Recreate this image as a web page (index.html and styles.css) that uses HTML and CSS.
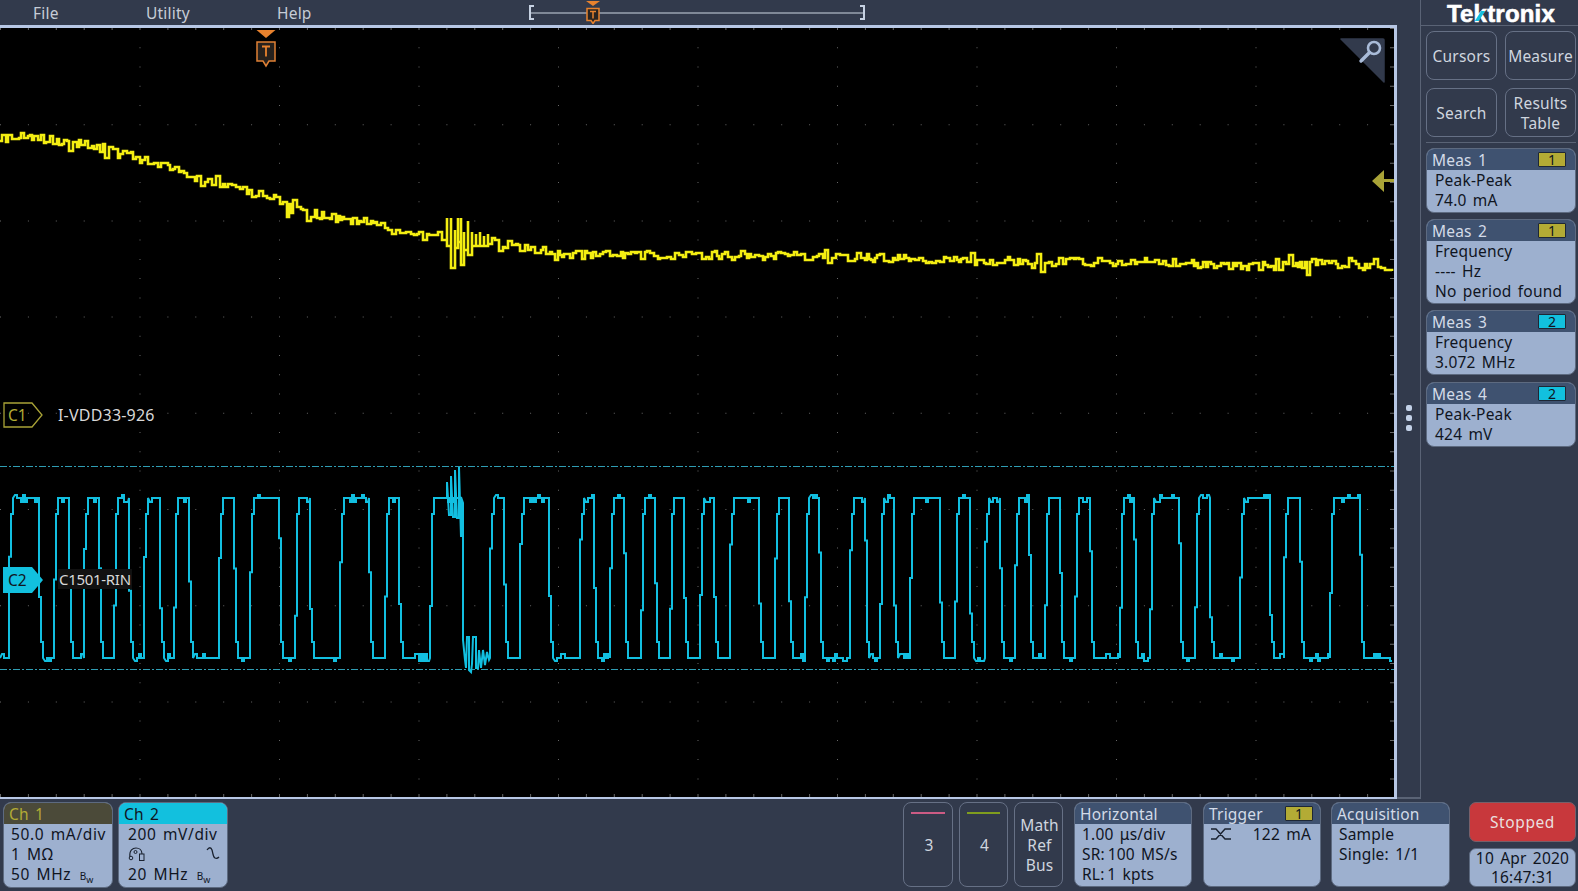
FILE: index.html
```html
<!DOCTYPE html>
<html>
    <head>
        <meta name="viewport" content="width=device-width, initial-scale=1" />
        <link rel="stylesheet" href="styles.css">
    </head>
    <body>
        <div class="scope">
            <div class="display">
                <div class="menubar">
                    <span class="menu-item item-file">File</span>
                    <span class="menu-item item-utility">Utility</span>
                    <span class="menu-item item-help">Help</span>
                    <div class="track">
                        <span class="track-line"></span>
                        <svg class="track-marker" width="16" height="25" viewBox="0 0 16 25">
                            <path d="M1 2h14l-7 5z" fill="#e8822e"/>
                            <path d="M2 9.500h12v12h-4l-2 3-2-3h-4z" fill="#2a2420" stroke="#e8822e" stroke-width="1.500"/>
                            <path d="M5 12.500h6M8 12.500v7" fill="none" stroke="#e8822e" stroke-width="1.500"/>
                        </svg>
                    </div>
                </div>
                <div class="plot">
                    <svg id="traces" class="traces" viewBox="0 28 1394 769" width="1394" height="769"></svg>

                    <svg class="trigger-marker" width="22" height="40" viewBox="0 0 22 40">
                        <path d="M1.500 1h19l-9.500 8z" fill="#e8822e"/>
                        <path d="M2 13h18v19h-6l-3 5-3-5h-6z" fill="#26211d" stroke="#e08035" stroke-width="1.500"/>
                        <path d="M7 17.500h8M11 17.500v10" fill="none" stroke="#e8822e" stroke-width="1.800"/>
                    </svg>

                    <div class="zoom-corner">
                        <svg width="46" height="46" viewBox="0 0 46 46">
                            <path d="M2 1h42a1 1 0 0 1 1 1v42z" fill="#323a4c" stroke="#323a4c" stroke-width="1.500" stroke-linejoin="round"/>
                            <circle cx="35" cy="10" r="6" fill="none" stroke="#a9bbd8" stroke-width="2.600"/>
                            <path d="M30.500 14.500L22 23" fill="none" stroke="#a9bbd8" stroke-width="3.400" stroke-linecap="round"/>
                        </svg>
                    </div>

                    <svg class="ref-arrow" width="23" height="22" viewBox="0 0 23 22">
                        <path d="M0 11L12 0v9h11v3h-11v10z" fill="#a9a337"/>
                    </svg>

                    <div class="tag tag-c1">
                        <svg width="40" height="26" viewBox="0 0 40 26">
                            <path d="M1 1h28l10 12-10 12h-28z" fill="none" stroke="#a9a337" stroke-width="1.300"/>
                        </svg>
                        <span class="tag-text">C1</span>
                    </div>
                    <span class="wave-name name-c1">I-VDD33-926</span>

                    <div class="tag tag-c2">
                        <svg width="40" height="26" viewBox="0 0 40 26">
                            <path d="M0 0h29l11 13-11 13h-29z" fill="#12c0de"/>
                        </svg>
                        <span class="tag-text">C2</span>
                    </div>
                    <span class="wave-name name-c2">C1501-RIN</span>
                </div>
            </div>

            <aside class="side">
                <div class="side-rail">
                    <span class="dot"></span>
                    <span class="dot"></span>
                    <span class="dot"></span>
                </div>
                <div class="side-main">
                    <div class="logo">Te<span class="logo-k">k</span>tronix</div>
                    <div class="tools">
                        <div class="ghost">Cursors</div>
                        <div class="ghost">Measure</div>
                        <div class="ghost">Search</div>
                        <div class="ghost">Results<br>Table</div>
                    </div>
                    <div class="meas-list">
                        <div class="badge">
                            <div class="badge-head">Meas 1 <span class="chip chip-yellow">1</span></div>
                            <div class="badge-body meas-body">Peak-Peak<br>74.0 mA</div>
                        </div>
                        <div class="badge">
                            <div class="badge-head">Meas 2 <span class="chip chip-yellow">1</span></div>
                            <div class="badge-body meas-body">Frequency<br>---- Hz<br>No period found</div>
                        </div>
                        <div class="badge">
                            <div class="badge-head">Meas 3 <span class="chip chip-cyan">2</span></div>
                            <div class="badge-body meas-body">Frequency<br>3.072 MHz</div>
                        </div>
                        <div class="badge">
                            <div class="badge-head">Meas 4 <span class="chip chip-cyan">2</span></div>
                            <div class="badge-body meas-body">Peak-Peak<br>424 mV</div>
                        </div>
                    </div>
                </div>
            </aside>

            <footer class="bottom">
                <div class="badge ch">
                    <div class="badge-head ch1-head">Ch 1</div>
                    <div class="badge-body">
                        <div>50.0 mA/div</div>
                        <div>1 MΩ</div>
                        <div>50 MHz <span class="bw">B<sub>w</sub></span></div>
                    </div>
                </div>
                <div class="badge ch ch-second">
                    <div class="badge-head ch2-head">Ch 2</div>
                    <div class="badge-body">
                        <div>200 mV/div</div>
                        <div class="icon-row">
                            <svg width="18" height="16" viewBox="0 0 18 16">
                                <path d="M2 11C1 4 5 2 8 2s6 2 6 6" fill="none" stroke="#1a2230" stroke-width="1.200"/>
                                <circle cx="3" cy="12" r="1.800" fill="none" stroke="#1a2230" stroke-width="1"/>
                                <circle cx="7.500" cy="6" r="1.500" fill="none" stroke="#1a2230" stroke-width="1"/>
                                <rect x="11.500" y="8" width="4.500" height="6.500" fill="none" stroke="#1a2230" stroke-width="1"/>
                            </svg>
                            <svg width="14" height="16" viewBox="0 0 14 16">
                                <path d="M1 4c2-3 4-3 5 0s1 7 3 8 3 0 4-1" fill="none" stroke="#1a2230" stroke-width="1.300"/>
                            </svg>
                        </div>
                        <div>20 MHz <span class="bw">B<sub>w</sub></span></div>
                    </div>
                </div>

                <div class="ghost slot slot-first">
                    <span class="slot-line slot-pink"></span>
                    <span>3</span>
                </div>
                <div class="ghost slot">
                    <span class="slot-line slot-green"></span>
                    <span>4</span>
                </div>
                <div class="ghost slot-text">Math<br>Ref<br>Bus</div>

                <div class="badge info">
                    <div class="badge-head">Horizontal</div>
                    <div class="badge-body">
                        <div>1.00 μs/div</div>
                        <div>SR:&thinsp;100 MS/s</div>
                        <div>RL:&thinsp;1 kpts</div>
                    </div>
                </div>
                <div class="badge info">
                    <div class="badge-head">Trigger <span class="chip chip-yellow">1</span></div>
                    <div class="badge-body">
                        <div class="icon-row trig-row">
                            <svg width="20" height="14" viewBox="0 0 20 14">
                                <path d="M0 2h5l9 10h6M0 12h5l9-10h6" fill="none" stroke="#1a2230" stroke-width="1.400"/>
                            </svg>
                            <span>122 mA</span>
                        </div>
                    </div>
                </div>
                <div class="badge info info-acq">
                    <div class="badge-head">Acquisition</div>
                    <div class="badge-body">
                        <div>Sample</div>
                        <div>Single: 1/1</div>
                    </div>
                </div>

                <div class="run-group">
                    <div class="stopped">Stopped</div>
                    <div class="clock">10 Apr 2020<br>16:47:31</div>
                </div>
            </footer>
        </div>

        <script src="script.js"></script>
    </body>
</html>
```

FILE: styles.css
```css
* {
    padding: 0;
    margin: 0;
    box-sizing: border-box;
}

:root {
    --color-bar: #323a4c;
    --color-line: #b7c7e5;
    --color-head: #3f5270;
    --color-body: #9db0cf;
    --color-ghost: #667085;
    --color-ink: #10151f;
    --color-soft: #cfd5df;
    --color-yellow: #b3ab35;
    --color-cyan: #12c0de;
}

html, body {
    height: 100%;
    overflow: hidden;
}

body {
    background: var(--color-bar);
    font-family: "Noto Sans", sans-serif;
    font-size: 15.5px;
    line-height: 20px;
    letter-spacing: 0.2px;
    word-spacing: 2px;
    white-space: nowrap;
    color: var(--color-soft);
}

.scope {
    display: grid;
    grid-template-columns: 1397px 181px;
    grid-template-rows: 799px 92px;
    height: 891px;
}

/* top bar + scope picture */
.display {
    display: flex;
    flex-direction: column;
}

.menubar {
    height: 25px;
    flex: none;
    display: flex;
    align-items: center;
    padding-left: 33px;
}

.menu-item {
    color: #c6ccd6;
}

.item-file {
    width: 113px;
}

.item-utility {
    width: 131px;
}

.item-help {
    width: 252px;
}

.track {
    position: relative;
    width: 336px;
    height: 15px;
    border-left: 2px solid #c6d1e2;
    border-right: 2px solid #c6d1e2;
    display: flex;
    align-items: center;
}

.track::before,
.track::after {
    content: "";
    position: absolute;
    top: 0;
    bottom: 0;
    left: 0;
    right: 0;
    border-top: 2px solid #c6d1e2;
    border-bottom: 2px solid #c6d1e2;
    width: 3px;
}

.track::after {
    left: auto;
}

.track-line {
    flex: 1;
    height: 2px;
    background: #7f8897;
}

.track-marker {
    position: absolute;
    left: 54px;
    top: -6px;
}

.plot {
    position: relative;
    flex: 1;
    background: #000;
    border-top: 3px solid var(--color-line);
    border-right: 3px solid var(--color-line);
    border-bottom: 2px solid var(--color-line);
    overflow: hidden;
}

.traces {
    display: block;
}

.trigger-marker {
    position: absolute;
    left: 255px;
    top: 1px;
}

.zoom-corner {
    position: absolute;
    left: 1339px;
    top: 10px;
    height: 46px;
}

.ref-arrow {
    position: absolute;
    left: 1372px;
    top: 142px;
}

.tag {
    position: absolute;
    left: 3px;
    width: 40px;
    height: 26px;
}

.tag svg {
    display: block;
}

.tag-text {
    position: absolute;
    left: 5px;
    top: 3px;
    letter-spacing: 0;
}

.tag-c1 {
    top: 374px;
    color: var(--color-yellow);
}

.tag-c2 {
    top: 539px;
    color: var(--color-ink);
}

.wave-name {
    position: absolute;
    left: 58px;
    font-size: 16px;
    word-spacing: 0;
    color: #d8d8d8;
}

.name-c1 {
    top: 377px;
}

.name-c2 {
    top: 541px;
    padding: 0 1px;
    font-size: 15px;
    letter-spacing: -0.3px;
    background: #111;
}

/* right column */
.side {
    display: flex;
}

.side-rail {
    width: 24px;
    border-right: 1px solid #5a6375;
    display: flex;
    flex-direction: column;
    align-items: center;
    gap: 4px;
    padding-top: 405px;
    border-bottom: 2px solid #5a6375;
}

.dot {
    width: 6px;
    height: 6px;
    border-radius: 2px;
    background: #c3d1e8;
}

.side-main {
    flex: 1;
    padding: 0 2px 0 5px;
}

.logo {
    height: 26px;
    margin: 0 -5px;
    border-bottom: 1px solid #5a6375;
    text-align: center;
    font-family: "Liberation Sans", sans-serif;
    font-weight: 700;
    font-size: 24px;
    line-height: 27px;
    letter-spacing: 0.2px;
    word-spacing: 0;
    -webkit-text-stroke: 0.6px #fff;
    color: #fff;
}

.logo-k {
    position: relative;
}

.logo-k::after {
    content: "";
    position: absolute;
    left: 4px;
    top: 11px;
    width: 4px;
    height: 10px;
    background: var(--color-cyan);
    transform: skewX(-32deg);
}

.tools {
    display: grid;
    grid-template-columns: 71px 71px;
    grid-auto-rows: 49px;
    gap: 8px;
    margin-top: 5px;
    padding-bottom: 5px;
    margin-bottom: 5px;
    border-bottom: 1px solid #5a6375;
}

.ghost {
    display: flex;
    align-items: center;
    justify-content: center;
    text-align: center;
    border: 1px solid var(--color-ghost);
    border-radius: 8px;
}

.meas-list {
    display: flex;
    flex-direction: column;
    gap: 6px;
}

.meas-list .badge:last-child {
    margin-top: 1px;
}

.meas-list .badge-head {
    padding-right: 9px;
}

/* readout badges */
.badge {
    border: 1px solid #5d6a80;
    border-radius: 8px;
    overflow: hidden;
    background: var(--color-body);
}

.badge-head {
    height: 21px;
    padding: 0 7px 0 5px;
    display: flex;
    align-items: center;
    justify-content: space-between;
    background: var(--color-head);
    color: #d3dbe8;
}

.badge-body {
    padding: 0 7px;
    color: var(--color-ink);
}

.meas-body {
    padding: 0 8px 2px;
}

.chip {
    width: 28px;
    height: 15px;
    border: 1px solid #1e2735;
    border-radius: 1px;
    font-size: 14px;
    line-height: 13px;
    text-align: center;
    color: var(--color-ink);
    letter-spacing: 0;
}

.chip-yellow {
    background: var(--color-yellow);
}

.chip-cyan {
    background: var(--color-cyan);
}

/* bottom row */
.bottom {
    grid-column: 1 / 3;
    display: flex;
    align-items: flex-start;
    gap: 6px;
    padding: 3px 2px 0 3px;
}

.ch {
    width: 110px;
    height: 86px;
}

.ch .badge-body {
    letter-spacing: 0.6px;
}

.ch-second {
    margin-left: -1px;
}

.ch-second .badge-body {
    padding-left: 9px;
}

.ch1-head {
    background: #4b4a39;
    color: var(--color-yellow);
}

.ch2-head {
    background: var(--color-cyan);
    color: var(--color-ink);
}

.icon-row {
    display: flex;
    align-items: center;
    justify-content: space-between;
    height: 20px;
}

.bw {
    font-size: 10px;
    letter-spacing: 0;
    margin-left: 2px;
}

.bw sub {
    font-size: 9px;
    line-height: 0;
}

.slot,
.slot-text {
    width: 49px;
    height: 85px;
    padding-left: 2px;
}

.slot {
    position: relative;
}

.slot-first {
    width: 50px;
    margin-left: 669px;
}

.slot-line {
    position: absolute;
    top: 9px;
    left: 7px;
    right: 7px;
    height: 2px;
}

.slot-pink {
    background: #cc5b84;
}

.slot-green {
    background: #7f9d1e;
}

.info {
    width: 118px;
    height: 85px;
    margin-left: 5px;
}

.info-acq {
    width: 119px;
    margin-left: 4px;
}

.trig-row {
    padding-right: 2px;
}

.trig-row span {
    margin-left: auto;
}

.run-group {
    margin-left: 13px;
    width: 107px;
    display: flex;
    flex-direction: column;
    gap: 6px;
}

.stopped {
    height: 40px;
    display: flex;
    align-items: center;
    justify-content: center;
    background: #c8383c;
    border: 1px solid #77606a;
    border-radius: 7px;
    letter-spacing: 0.6px;
    color: #eadfdf;
}

.clock {
    height: 39px;
    background: var(--color-body);
    border: 1px solid #5d6a80;
    border-radius: 7px;
    color: var(--color-ink);
    text-align: center;
    line-height: 19px;
}
```

FILE: script.js
```js
const SVG_NS = 'http://www.w3.org/2000/svg';
const HIGH = 498;
const LOW = 658;

// Rising and falling edges of Ch 2, alternating, rising first
const edges = [
    12, 42, 57, 72, 87, 102, 117, 132, 147, 163, 177, 192, 222, 237, 253, 282,
    298, 313, 343, 372, 388, 402, 433, 463, 493, 507, 523, 552, 583, 597, 613, 627,
    644, 658, 673, 687, 703, 717, 733, 762, 778, 792, 808, 822, 853, 868, 883, 897,
    913, 943, 958, 973, 988, 1003, 1018, 1032, 1048, 1063, 1078, 1093, 1123, 1137,
    1153, 1182, 1198, 1213, 1243, 1273, 1287, 1303, 1333, 1363
];

// The burst on the Ch 1 trace: x, top, bottom
const burst = [
    [444, 226, 244], [448, 218, 246], [452, 218, 268], [456, 230, 248], [459, 218, 242],
    [462, 218, 265], [465, 232, 250], [469, 221, 255], [473, 232, 246], [477, 234, 246],
    [481, 232, 246], [485, 236, 246], [489, 234, 244]
];

// Same picture every load
let seed = 4711;
function rand(){
    seed = (seed * 16807) % 2147483647;
    return seed / 2147483647;
}

function add(tag, attrs, parent){
    let el = document.createElementNS(SVG_NS, tag);
    for(let key in attrs){
        el.setAttribute(key, attrs[key]);
    }
    parent.appendChild(el);
    return el;
}

/**
 * Dots of the graticule: the 10x8 division lines with 5 ticks per division
 */
function drawGraticule(svg){
    let stepX = 139.5;
    let stepY = 96.2;
    let d = '';
    for(let col = 1; col < 10; col++){
        for(let y = 28; y < 797; y += stepY / 5){
            d += `M${(col * stepX).toFixed(1)} ${y.toFixed(1)}h1v1h-1z`;
        }
    }
    for(let row = 1; row < 8; row++){
        for(let x = 0; x < 1394; x += stepX / 5){
            d += `M${x.toFixed(1)} ${(28 + row * stepY).toFixed(1)}h1v1h-1z`;
        }
    }
    // edge ticks
    for(let x = 0; x < 1394; x += stepX / 5){
        d += `M${x.toFixed(1)} 28h1v2h-1zM${x.toFixed(1)} 794h1v3h-1z`;
    }
    for(let y = 28; y < 797; y += stepY / 5){
        d += `M1390 ${y.toFixed(1)}h4v1h-4z`;
    }
    add('path', {d: d, fill: '#8a8a8a', opacity: 0.75}, svg);

    add('path', {
        d: 'M0 466.500H1394M0 669.500H1394',
        fill: 'none',
        stroke: '#2f9db3',
        'stroke-width': 1,
        'stroke-dasharray': '7 2 2 2'
    }, svg);
}

/**
 * Flat stretch of the square wave with small noise bumps
 */
function flat(points, from, to, level, dir){
    for(let x = from + 2; x < to - 1; x += 2){
        let r = rand();
        let y = level;
        if(r < 0.14) y = level + dir * 3;
        else if(r < 0.28) y = level - dir * 4;
        points.push(x + ',' + y);
        points.push((x + 2) + ',' + y);
    }
}

function edge(points, x, rising){
    let from = rising ? LOW : HIGH;
    let to = rising ? HIGH : LOW;
    let mid = from + (to - from) * (0.25 + rand() * 0.5);
    let near = from + (to - from) * 0.9;
    let start = x - 3;
    points.push(start + ',' + from);
    points.push(start + ',' + mid.toFixed(1));
    points.push((start + 2) + ',' + mid.toFixed(1));
    points.push((start + 2) + ',' + near.toFixed(1));
    points.push((start + 4) + ',' + near.toFixed(1));
    points.push((start + 4) + ',' + to);
}

function drawCyan(svg){
    let points = ['0,' + LOW];
    flat(points, 0, edges[0] - 3, LOW, 1);
    for(let i = 0; i < edges.length; i++){
        let rising = i % 2 == 0;
        let x = edges[i];
        if(x == 463){
            // glitch on the falling edge and the ringing after it
            points.push('447,498', '447,482', '449,515', '451,515', '451,476', '453,517', '455,517',
                '455,470', '457,518', '459,518', '459,467', '461,537', '461,497', '463,503', '463,640',
                '465,660', '466,668', '467,637', '469,637', '469,670', '471,672', '472,664', '473,637',
                '476,637', '476,668', '478,668', '479,650', '481,668', '483,650', '485,665', '487,652',
                '489,660');
            continue;
        }
        edge(points, x, rising);
        let next = i + 1 < edges.length ? edges[i + 1] - 3 : 1392;
        if(rising){
            flat(points, x + 1, next, HIGH, -1);
        }else{
            flat(points, x + 1, next, LOW, 1);
        }
    }
    add('polyline', {
        points: points.join(' '),
        fill: 'none',
        stroke: '#12bfe0',
        'stroke-width': 2
    }, svg);
}

function levelAt(x, knots){
    for(let i = 1; i < knots.length; i++){
        if(x <= knots[i][0]){
            let a = knots[i - 1];
            let b = knots[i];
            return a[1] + (b[1] - a[1]) * (x - a[0]) / (b[0] - a[0]);
        }
    }
    return knots[knots.length - 1][1];
}

function drawYellow(svg){
    let knots = [[0, 140], [20, 135], [50, 140], [85, 144], [110, 152], [135, 157], [160, 165],
        [200, 178], [235, 190], [265, 195], [290, 206], [320, 216], [360, 221], [400, 232],
        [445, 238], [500, 242], [520, 248], [560, 253], [640, 255], [700, 255], [760, 256],
        [900, 258], [1000, 261], [1100, 262], [1200, 264], [1270, 266], [1340, 264], [1392, 268]];
    let d = 'M0 141';
    let x = 2;
    while(x < 1393){
        let inBurst = burst.find(b => b[0] == x || b[0] == x + 1);
        if(x >= 444 && x < 492){
            if(inBurst){
                d += `H${x}V${inBurst[1]}V${inBurst[2]}`;
                x += 3;
            }else{
                x += 1;
            }
            continue;
        }
        let y = levelAt(x, knots) + (rand() - 0.5) * 9;
        if(rand() < 0.04){
            y += 8;
        }else if(rand() < 0.04){
            y -= 6;
        }
        d += `H${x}V${y.toFixed(0)}`;
        // hold some samples so the trace gets its blocky look
        x += 2 + Math.floor(rand() * 3);
    }
    d += 'H1392';
    add('path', {
        d: d,
        fill: 'none',
        stroke: '#f4ee12',
        'stroke-width': 2.6
    }, svg);
}

function init(){
    let svg = document.getElementById('traces');
    drawGraticule(svg);
    drawYellow(svg);
    drawCyan(svg);
}

window.onload = init;
```
